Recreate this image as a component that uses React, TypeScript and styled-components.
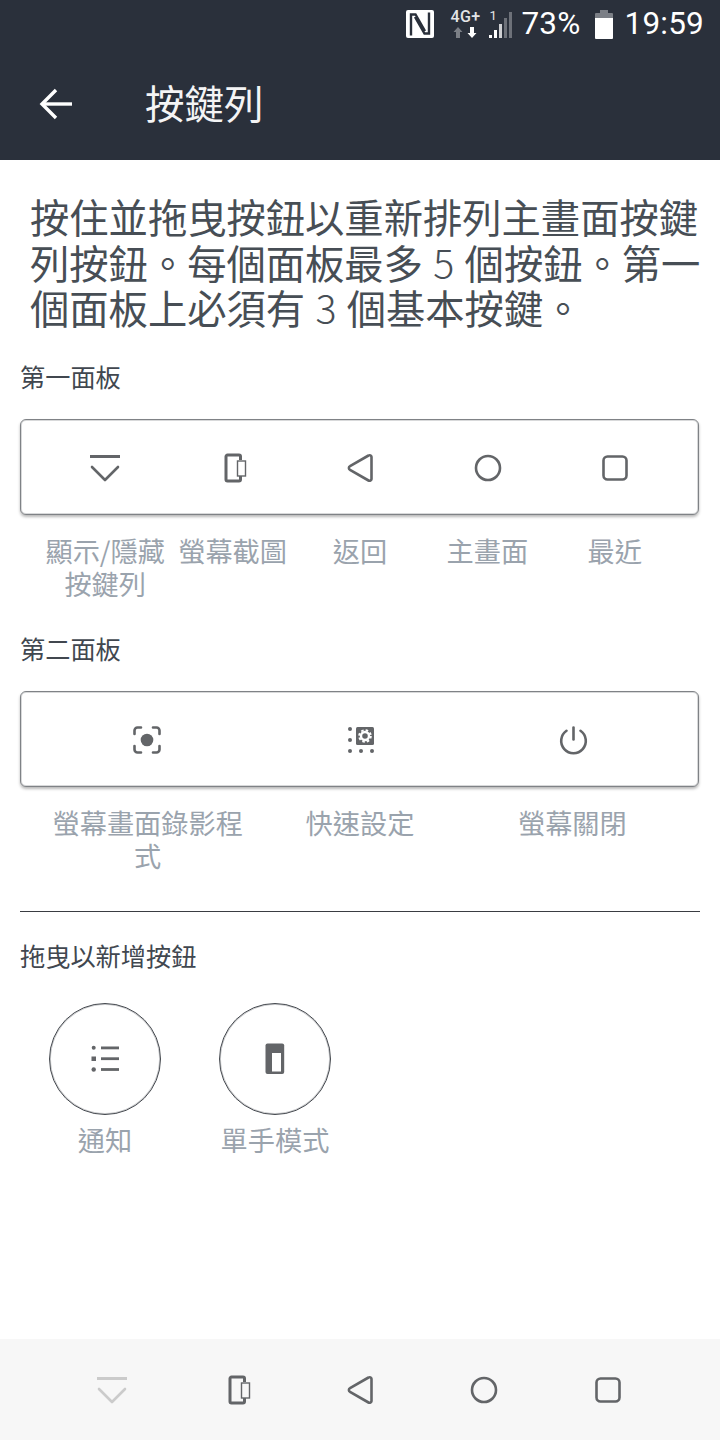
import React from "react";
import styled, { createGlobalStyle } from "styled-components";

const CJK = `"Noto Sans CJK TC", "Noto Sans CJK SC", Roboto, sans-serif`;

const GlobalStyle = createGlobalStyle`
  html, body {
    margin: 0;
    padding: 0;
    background: #ffffff;
  }
  * {
    box-sizing: border-box;
  }
`;

const Screen = styled.div`
  width: 720px;
  height: 1440px;
  display: flex;
  flex-direction: column;
  font-family: ${CJK};
  overflow: hidden;
`;

const Header = styled.header`
  height: 160px;
  background: #2a303b;
  color: #ffffff;
  display: flex;
  flex-direction: column;
  flex: none;
`;

const StatusBar = styled.div`
  height: 48px;
  display: flex;
  align-items: center;
  justify-content: flex-end;
  padding-right: 16px;
`;

const StatusText = styled.span<{ $gap: number }>`
  font-family: Roboto, sans-serif;
  font-size: 31.5px;
  line-height: 48px;
  margin-left: ${(p) => p.$gap}px;
  letter-spacing: 0.2px;
`;

const Network = styled.div`
  width: 32px;
  height: 30px;
  margin-left: 15px;
  display: flex;
  flex-direction: column;
  align-items: center;
`;

const NetworkLabel = styled.span`
  font-family: Roboto, sans-serif;
  font-size: 16px;
  font-weight: 500;
  line-height: 14px;
  margin-top: 1px;
  color: #e4e5e7;
  letter-spacing: 0.3px;
`;

const SignalWrap = styled.div`
  position: relative;
  width: 24px;
  height: 30px;
  margin-left: 7px;
`;

const SimNumber = styled.span`
  position: absolute;
  left: 1px;
  top: 1px;
  font-family: Roboto, sans-serif;
  font-size: 13px;
  line-height: 12px;
  color: #e4e5e7;
`;

const ToolBar = styled.div`
  height: 112px;
  display: flex;
  align-items: center;
  padding: 0 0 5px 39px;
`;

const BackButton = styled.button`
  width: 34px;
  height: 34px;
  margin-top: 4px;
  padding: 0;
  border: 0;
  background: none;
  display: flex;
`;

const Title = styled.h1`
  margin: 0 0 0 72px;
  font-size: 39.5px;
  font-weight: 400;
  line-height: 48px;
  color: #f4f4f5;
`;

const Content = styled.main`
  flex: 1;
  padding: 33px 20px 0;
  display: flex;
  flex-direction: column;
`;

const Intro = styled.p`
  margin: 0 0 0 10px;
  width: 680px;
  font-size: 39.3px;
  font-weight: 400;
  line-height: 45.5px;
  word-spacing: 1.5px;
  color: #474e55;
`;

const Digit = styled.span`
  font-weight: 300;
`;

const SectionLabel = styled.div<{ $top: number }>`
  margin-top: ${(p) => p.$top}px;
  font-size: 25.2px;
  line-height: 36px;
  color: #41474f;
`;

const Panel = styled.div<{ $cols: number }>`
  margin-top: 25px;
  width: 679px;
  height: 96px;
  padding: 2px 19px 0 20px;
  display: grid;
  grid-template-columns: repeat(${(p) => p.$cols}, 1fr);
  align-items: center;
  justify-items: center;
  border: 1px solid #7f8286;
  border-radius: 6px;
  box-shadow: 0 2px 3px rgba(0, 0, 0, 0.28), inset 0 0 0 1px rgba(127, 130, 134, 0.3);
  background: #ffffff;
`;

const LabelRow = styled.div<{ $cols: number }>`
  margin-top: 19px;
  width: 679px;
  height: 66px;
  padding: 0 20.5px 0 21.5px;
  display: grid;
  grid-template-columns: repeat(${(p) => p.$cols}, 1fr);
`;

const KeyLabel = styled.div`
  font-size: 27.2px;
  line-height: 33px;
  text-align: center;
  color: #9aa3ad;
  padding: 0 1px;
`;

const Divider = styled.hr`
  margin: 39px 0 0;
  width: 680px;
  height: 1px;
  border: 0;
  background: #3a3d42;
`;

const DragRow = styled.div`
  margin-top: 30px;
  margin-left: 29px;
  display: flex;
  gap: 58px;
`;

const DragItem = styled.div`
  width: 112px;
  display: flex;
  flex-direction: column;
  align-items: center;
`;

const DragCircle = styled.div`
  width: 112px;
  height: 112px;
  border: 1px solid #44484e;
  border-radius: 50%;
  box-shadow: inset 0 0 0 1px rgba(68, 72, 78, 0.3);
  display: flex;
  align-items: center;
  justify-content: center;
`;

const DragLabel = styled(KeyLabel)`
  margin-top: 8px;
  padding: 0;
  white-space: nowrap;
`;

const NavBar = styled.nav`
  height: 101px;
  flex: none;
  background: #f7f7f7;
  padding: 0 50px;
  display: grid;
  grid-template-columns: repeat(5, 1fr);
  align-items: center;
  justify-items: center;
`;

const GRAY = "#636568";

type IconProps = { size?: number; color?: string; fill?: string };

function HideIcon({ size = 32, color = GRAY }: IconProps) {
  return (
    <svg width={size} height={size} viewBox="0 0 32 32" fill="none" stroke={color} strokeLinecap="round" strokeLinejoin="round">
      <path d="M1 4.500h30" strokeWidth="3" strokeLinecap="butt" />
      <path d="M3 15 16 28 29 15" strokeWidth="2.600" />
    </svg>
  );
}

function ScreenshotIcon({ size = 32, fill = "#ffffff" }: IconProps) {
  return (
    <svg width={size} height={size} viewBox="0 0 32 32" fill="none">
      <path d="M24.500 8V4.500A1.500 1.500 0 0 0 23 3H11.500A1.500 1.500 0 0 0 10 4.500v23a1.500 1.500 0 0 0 1.500 1.500H23a1.500 1.500 0 0 0 1.500-1.500V24" stroke={GRAY} strokeWidth="3" />
      <rect x="21.500" y="9" width="8" height="15" fill={fill} stroke={GRAY} strokeWidth="1.400" />
    </svg>
  );
}

function BackIcon({ size = 32 }: IconProps) {
  return (
    <svg width={size} height={size} viewBox="0 0 32 32" fill="none">
      <path d="M24.500 3.500 6 14.200a2 2 0 0 0 0 3.600l18.500 10.700A2 2 0 0 0 27.500 27V5a2 2 0 0 0-3-1.500Z" stroke={GRAY} strokeWidth="2.600" strokeLinejoin="round" />
    </svg>
  );
}

function HomeIcon({ size = 32 }: IconProps) {
  return (
    <svg width={size} height={size} viewBox="0 0 32 32" fill="none">
      <circle cx="16" cy="16" r="12" stroke={GRAY} strokeWidth="2.600" />
    </svg>
  );
}

function RecentIcon({ size = 32 }: IconProps) {
  return (
    <svg width={size} height={size} viewBox="0 0 32 32" fill="none">
      <rect x="4.500" y="4.500" width="23" height="23" rx="4" stroke={GRAY} strokeWidth="2.600" />
    </svg>
  );
}

function RecordIcon() {
  return (
    <svg width="32" height="32" viewBox="0 0 32 32" fill="none">
      <circle cx="16" cy="16" r="6.300" fill={GRAY} />
      <path d="M3.500 10V6.500a3 3 0 0 1 3-3H10M22 3.500h3.500a3 3 0 0 1 3 3V10M28.500 22v3.500a3 3 0 0 1-3 3H22M10 28.500H6.500a3 3 0 0 1-3-3V22" stroke={GRAY} strokeWidth="2.600" strokeLinecap="round" />
    </svg>
  );
}

function QuickSettingsIcon() {
  return (
    <svg width="32" height="32" viewBox="0 0 32 32">
      <rect x="12" y="3" width="18" height="18" rx="1.500" fill={GRAY} />
      <circle cx="21" cy="12" r="5.800" fill="none" stroke="#ffffff" strokeWidth="2" strokeDasharray="2.500 2.050" />
      <circle cx="21" cy="12" r="4" fill="none" stroke="#ffffff" strokeWidth="2.400" />
      <g fill={GRAY}>
        <circle cx="6" cy="5" r="2" />
        <circle cx="6" cy="16" r="2" />
        <circle cx="6" cy="27" r="2" />
        <circle cx="17" cy="27" r="2" />
        <circle cx="28" cy="27" r="2" />
      </g>
    </svg>
  );
}

function PowerIcon() {
  return (
    <svg width="32" height="32" viewBox="0 0 32 32" fill="none" stroke={GRAY} strokeWidth="2.600" strokeLinecap="round">
      <path d="M16.500 3.500v12" />
      <path d="M9.500 6.800a12.300 12.300 0 1 0 14 0" />
    </svg>
  );
}

function NotificationIcon() {
  return (
    <svg width="32" height="32" viewBox="0 0 32 32" fill={GRAY}>
      <circle cx="4.700" cy="4.800" r="2" />
      <rect x="2.500" y="13.500" width="4.500" height="4.500" />
      <circle cx="4.700" cy="26.500" r="2.200" />
      <rect x="12" y="3.500" width="18" height="2.800" />
      <rect x="12" y="14.300" width="18" height="2.800" />
      <rect x="12" y="25.100" width="18" height="2.800" />
    </svg>
  );
}

function OneHandIcon() {
  return (
    <svg width="32" height="32" viewBox="0 0 32 32">
      <rect x="6.500" y="0.500" width="18.700" height="30.500" rx="2" fill={GRAY} />
      <rect x="13" y="10" width="9" height="18.500" fill="#ffffff" />
    </svg>
  );
}

function ArrowLeftIcon() {
  return (
    <svg width="34" height="34" viewBox="0 0 34 34" fill="none" stroke="#ffffff" strokeWidth="3.400">
      <path d="M33 17H3" />
      <path d="M17 3 3 17l14 14" />
    </svg>
  );
}

function NfcIcon() {
  return (
    <svg width="28" height="28" viewBox="0 0 28 28" style={{ flex: "none" }}>
      <rect width="28" height="28" rx="2" fill="#ffffff" />
      <path d="M5 25.500V4.500h4.500L19 21M23 2.500v21h-4.500L9 7" fill="none" stroke="#2a303b" strokeWidth="2.400" />
    </svg>
  );
}

function NetworkArrows() {
  return (
    <svg width="26" height="15" viewBox="0 0 26 15">
      <path d="M6 3 1.500 8H4v6h4V8h2.500Z" fill="#7b7f86" />
      <path d="M20 14l4.500-5H22V3h-4v6h-2.500Z" fill="#ffffff" />
    </svg>
  );
}

function SignalIcon() {
  return (
    <svg width="24" height="30" viewBox="0 0 24 30">
      <path d="M1 26h3v3H1Z" fill="#ffffff" />
      <path d="M6 21h3v8H6Z" fill="#ffffff" />
      <path d="M11 15h3v14h-3Z" fill="#cfd0d3" />
      <path d="M16 9h3v20h-3Z" fill="#6d7179" />
      <path d="M21 3h3v26h-3Z" fill="#6d7179" />
    </svg>
  );
}

function BatteryIcon() {
  return (
    <svg width="18" height="30" viewBox="0 0 18 30" style={{ marginLeft: 14 }}>
      <path d="M5 1h8v3h4a1 1 0 0 1 1 1v6H0V5a1 1 0 0 1 1-1h4Z" fill="#7b7f86" />
      <path d="M0 9h18v20a1 1 0 0 1-1 1H1a1 1 0 0 1-1-1Z" fill="#ffffff" />
    </svg>
  );
}

const firstPanel = [
  { label: "顯示/隱藏 按鍵列", icon: <HideIcon /> },
  { label: "螢幕截圖", icon: <ScreenshotIcon /> },
  { label: "返回", icon: <BackIcon /> },
  { label: "主畫面", icon: <HomeIcon /> },
  { label: "最近", icon: <RecentIcon /> },
];

const secondPanel = [
  { label: "螢幕畫面錄影程式", icon: <RecordIcon /> },
  { label: "快速設定", icon: <QuickSettingsIcon /> },
  { label: "螢幕關閉", icon: <PowerIcon /> },
];

function App() {
  return (
    <Screen>
      <GlobalStyle />
      <Header>
        <StatusBar>
          <NfcIcon />
          <Network>
            <NetworkLabel>4G+</NetworkLabel>
            <NetworkArrows />
          </Network>
          <SignalWrap>
            <SimNumber>1</SimNumber>
            <SignalIcon />
          </SignalWrap>
          <StatusText $gap={9}>73%</StatusText>
          <BatteryIcon />
          <StatusText $gap={12}>19:59</StatusText>
        </StatusBar>
        <ToolBar>
          <BackButton>
            <ArrowLeftIcon />
          </BackButton>
          <Title>按鍵列</Title>
        </ToolBar>
      </Header>
      <Content>
        <Intro>
          按住並拖曳按鈕以重新排列主畫面按鍵列按鈕。每個面板最多 <Digit>5</Digit> 個按鈕。第一個面板上必須有 <Digit>3</Digit> 個基本按鍵。
        </Intro>
        <SectionLabel $top={28}>第一面板</SectionLabel>
        <Panel $cols={5}>
          {firstPanel.map((k) => (
            <React.Fragment key={k.label}>{k.icon}</React.Fragment>
          ))}
        </Panel>
        <LabelRow $cols={5}>
          {firstPanel.map((k) => (
            <KeyLabel key={k.label}>{k.label}</KeyLabel>
          ))}
        </LabelRow>
        <SectionLabel $top={30}>第二面板</SectionLabel>
        <Panel $cols={3}>
          {secondPanel.map((k) => (
            <React.Fragment key={k.label}>{k.icon}</React.Fragment>
          ))}
        </Panel>
        <LabelRow $cols={3}>
          {secondPanel.map((k) => (
            <KeyLabel key={k.label}>{k.label}</KeyLabel>
          ))}
        </LabelRow>
        <Divider />
        <SectionLabel $top={25}>拖曳以新增按鈕</SectionLabel>
        <DragRow>
          <DragItem>
            <DragCircle>
              <NotificationIcon />
            </DragCircle>
            <DragLabel>通知</DragLabel>
          </DragItem>
          <DragItem>
            <DragCircle>
              <OneHandIcon />
            </DragCircle>
            <DragLabel>單手模式</DragLabel>
          </DragItem>
        </DragRow>
      </Content>
      <NavBar>
        <HideIcon color="#cbcbcb" />
        <ScreenshotIcon fill="#f7f7f7" />
        <BackIcon />
        <HomeIcon />
        <RecentIcon />
      </NavBar>
    </Screen>
  );
}

export default App;
